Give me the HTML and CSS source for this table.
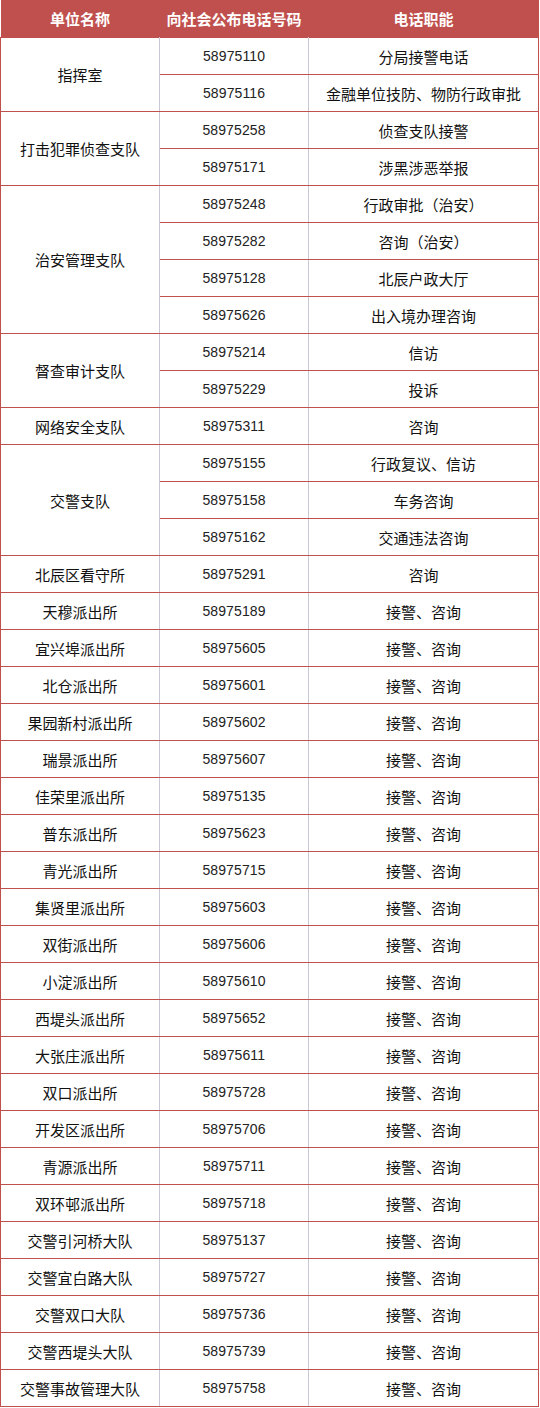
FILE: index.html
```html
<!DOCTYPE html>
<html lang="zh">
<head>
<meta charset="utf-8">
<title>电话号码</title>
<link rel="stylesheet" href="styles.css">
</head>
<body>
<table class="tel">
<colgroup><col class="c1"><col class="c2"><col class="c3"></colgroup>
<thead>
<tr><th>单位名称</th><th>向社会公布电话号码</th><th>电话职能</th></tr>
</thead>
<tbody>
<tr><td class="name" rowspan="2">指挥室</td><td class="num">58975110</td><td class="fn">分局接警电话</td></tr>
<tr><td class="num">58975116</td><td class="fn">金融单位技防、物防行政审批</td></tr>
<tr><td class="name" rowspan="2">打击犯罪侦查支队</td><td class="num">58975258</td><td class="fn">侦查支队接警</td></tr>
<tr><td class="num">58975171</td><td class="fn">涉黑涉恶举报</td></tr>
<tr><td class="name" rowspan="4">治安管理支队</td><td class="num">58975248</td><td class="fn">行政审批（治安）</td></tr>
<tr><td class="num">58975282</td><td class="fn">咨询（治安）</td></tr>
<tr><td class="num">58975128</td><td class="fn">北辰户政大厅</td></tr>
<tr><td class="num">58975626</td><td class="fn">出入境办理咨询</td></tr>
<tr><td class="name" rowspan="2">督查审计支队</td><td class="num">58975214</td><td class="fn">信访</td></tr>
<tr><td class="num">58975229</td><td class="fn">投诉</td></tr>
<tr><td class="name">网络安全支队</td><td class="num">58975311</td><td class="fn">咨询</td></tr>
<tr><td class="name" rowspan="3">交警支队</td><td class="num">58975155</td><td class="fn">行政复议、信访</td></tr>
<tr><td class="num">58975158</td><td class="fn">车务咨询</td></tr>
<tr><td class="num">58975162</td><td class="fn">交通违法咨询</td></tr>
<tr><td class="name">北辰区看守所</td><td class="num">58975291</td><td class="fn">咨询</td></tr>
<tr><td class="name">天穆派出所</td><td class="num">58975189</td><td class="fn">接警、咨询</td></tr>
<tr><td class="name">宜兴埠派出所</td><td class="num">58975605</td><td class="fn">接警、咨询</td></tr>
<tr><td class="name">北仓派出所</td><td class="num">58975601</td><td class="fn">接警、咨询</td></tr>
<tr><td class="name">果园新村派出所</td><td class="num">58975602</td><td class="fn">接警、咨询</td></tr>
<tr><td class="name">瑞景派出所</td><td class="num">58975607</td><td class="fn">接警、咨询</td></tr>
<tr><td class="name">佳荣里派出所</td><td class="num">58975135</td><td class="fn">接警、咨询</td></tr>
<tr><td class="name">普东派出所</td><td class="num">58975623</td><td class="fn">接警、咨询</td></tr>
<tr><td class="name">青光派出所</td><td class="num">58975715</td><td class="fn">接警、咨询</td></tr>
<tr><td class="name">集贤里派出所</td><td class="num">58975603</td><td class="fn">接警、咨询</td></tr>
<tr><td class="name">双街派出所</td><td class="num">58975606</td><td class="fn">接警、咨询</td></tr>
<tr><td class="name">小淀派出所</td><td class="num">58975610</td><td class="fn">接警、咨询</td></tr>
<tr><td class="name">西堤头派出所</td><td class="num">58975652</td><td class="fn">接警、咨询</td></tr>
<tr><td class="name">大张庄派出所</td><td class="num">58975611</td><td class="fn">接警、咨询</td></tr>
<tr><td class="name">双口派出所</td><td class="num">58975728</td><td class="fn">接警、咨询</td></tr>
<tr><td class="name">开发区派出所</td><td class="num">58975706</td><td class="fn">接警、咨询</td></tr>
<tr><td class="name">青源派出所</td><td class="num">58975711</td><td class="fn">接警、咨询</td></tr>
<tr><td class="name">双环邨派出所</td><td class="num">58975718</td><td class="fn">接警、咨询</td></tr>
<tr><td class="name">交警引河桥大队</td><td class="num">58975137</td><td class="fn">接警、咨询</td></tr>
<tr><td class="name">交警宜白路大队</td><td class="num">58975727</td><td class="fn">接警、咨询</td></tr>
<tr><td class="name">交警双口大队</td><td class="num">58975736</td><td class="fn">接警、咨询</td></tr>
<tr><td class="name">交警西堤头大队</td><td class="num">58975739</td><td class="fn">接警、咨询</td></tr>
<tr><td class="name">交警事故管理大队</td><td class="num">58975758</td><td class="fn">接警、咨询</td></tr>
</tbody>
</table>
</body>
</html>
```

FILE: styles.css
```css
html, body {
  margin: 0;
  padding: 0;
  background: #ffffff;
}

.tel {
  width: 538px;
  table-layout: fixed;
  border-collapse: collapse;
  font-family: "Liberation Sans", "Noto Sans CJK SC", sans-serif;
  font-size: 15px;
  color: #111111;
}

.c1 { width: 159px; }
.c2 { width: 149px; }
.c3 { width: 230px; }

.tel th {
  height: 37px;
  padding: 0;
  background: #c0504d;
  color: #ffffff;
  font-weight: bold;
  font-size: 15px;
  text-align: center;
  border: none;
}

.tel td {
  height: 36px;
  padding: 0;
  text-align: center;
  vertical-align: middle;
  border-top: 1px solid #c0504d;
  border-bottom: 1px solid #c0504d;
  border-left: 1px solid #c8c8d8;
  border-right: 1px solid #c8c8d8;
}

.tel .name {
  font-size: 15px;
  border-left: 1px solid #c0504d;
}

.tel .num {
  font-size: 14px;
  color: #222222;
  letter-spacing: 0.1px;
}

.tel .fn {
  font-size: 15px;
  border-right: 1px solid #c0504d;
}
```
